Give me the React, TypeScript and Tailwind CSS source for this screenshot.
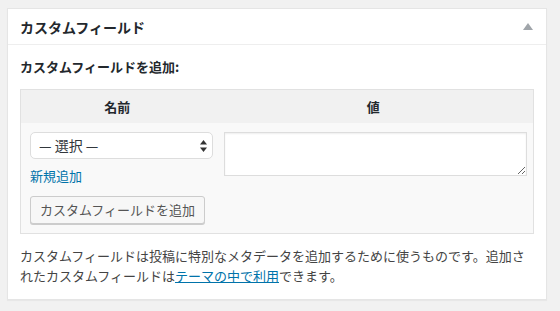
import React from 'react';

const font = "font-['Noto_Sans_CJK_JP','Noto_Sans',sans-serif]";

const App: React.FC = () => {
  return (
    <div className={`w-[560px] h-[311px] bg-[#f1f1f1] pt-[8px] pl-[7px] ${font}`}>
      <div className="w-[540px] bg-white border border-[#e5e5e5] shadow-[0_1px_1px_rgba(0,0,0,0.04)]">
        {/* Header */}
        <div className="h-[36px] flex items-center justify-between px-[12px] border-b border-[#eeeeee]">
          <h2 className="text-[14px] font-bold text-[#23282d] leading-none">カスタムフィールド</h2>
          <svg width="10" height="7" viewBox="0 0 10 7" className="mr-[1px]">
            <path d="M5 0 L10 7 L0 7 Z" fill="#a0a5aa" />
          </svg>
        </div>

        {/* Body */}
        <div className="px-[12px] pt-[12px] pb-[13px]">
          <p className="text-[13px] font-bold text-[#23282d] leading-[20px]">カスタムフィールドを追加:</p>

          <table className="mt-[12px] w-[514px] border border-[#e1e1e1] bg-[#f9f9f9] border-collapse">
            <thead>
              <tr className="bg-[#f1f1f1] h-[33px]">
                <th className="w-[193px] text-[13px] font-bold text-[#23282d] text-center">名前</th>
                <th className="text-[13px] font-bold text-[#23282d] text-center">値</th>
              </tr>
            </thead>
            <tbody>
              <tr>
                <td className="align-top pl-[9px] pt-[9px] pb-[9px] pr-[0px]">
                  <div className="relative w-[183px] h-[27px]">
                    <select className={`appearance-none w-full h-full border border-[#dddddd] rounded-[5px] bg-white pl-[8px] text-[14px] text-[#32373c] ${font}`}>
                      <option>— 選択 —</option>
                    </select>
                    <svg width="7" height="12" viewBox="0 0 7 12" className="absolute right-[6px] top-[8px] pointer-events-none">
                      <path d="M3.5 0 L7 4.5 L0 4.5 Z" fill="#333" />
                      <path d="M3.5 12 L7 7.5 L0 7.5 Z" fill="#333" />
                    </svg>
                  </div>
                  <a href="#" className="block mt-[7px] text-[13px] leading-[20px] text-[#0073aa]">新規追加</a>
                  <button className={`mt-[10px] h-[28px] px-[9px] border border-[#cccccc] rounded-[3px] bg-[#f7f7f7] shadow-[0_1px_0_#cccccc] text-[13px] text-[#555555] leading-none ${font}`}>
                    カスタムフィールドを追加
                  </button>
                </td>
                <td className="align-top pl-[10px] pr-[5px] pt-[9px]">
                  <textarea className={`block w-[303px] h-[44px] border border-[#dddddd] shadow-[inset_0_1px_2px_rgba(0,0,0,0.07)] bg-white ${font}`} />
                </td>
              </tr>
            </tbody>
          </table>

          <p className="mt-[12px] text-[13px] leading-[20px] text-[#444444]">
            カスタムフィールドは投稿に特別なメタデータを追加するために使うものです。追加されたカスタムフィールドは
            <a href="#" className="text-[#0073aa] underline">テーマの中で利用</a>
            できます。
          </p>
        </div>
      </div>
    </div>
  );
};

export default App;
